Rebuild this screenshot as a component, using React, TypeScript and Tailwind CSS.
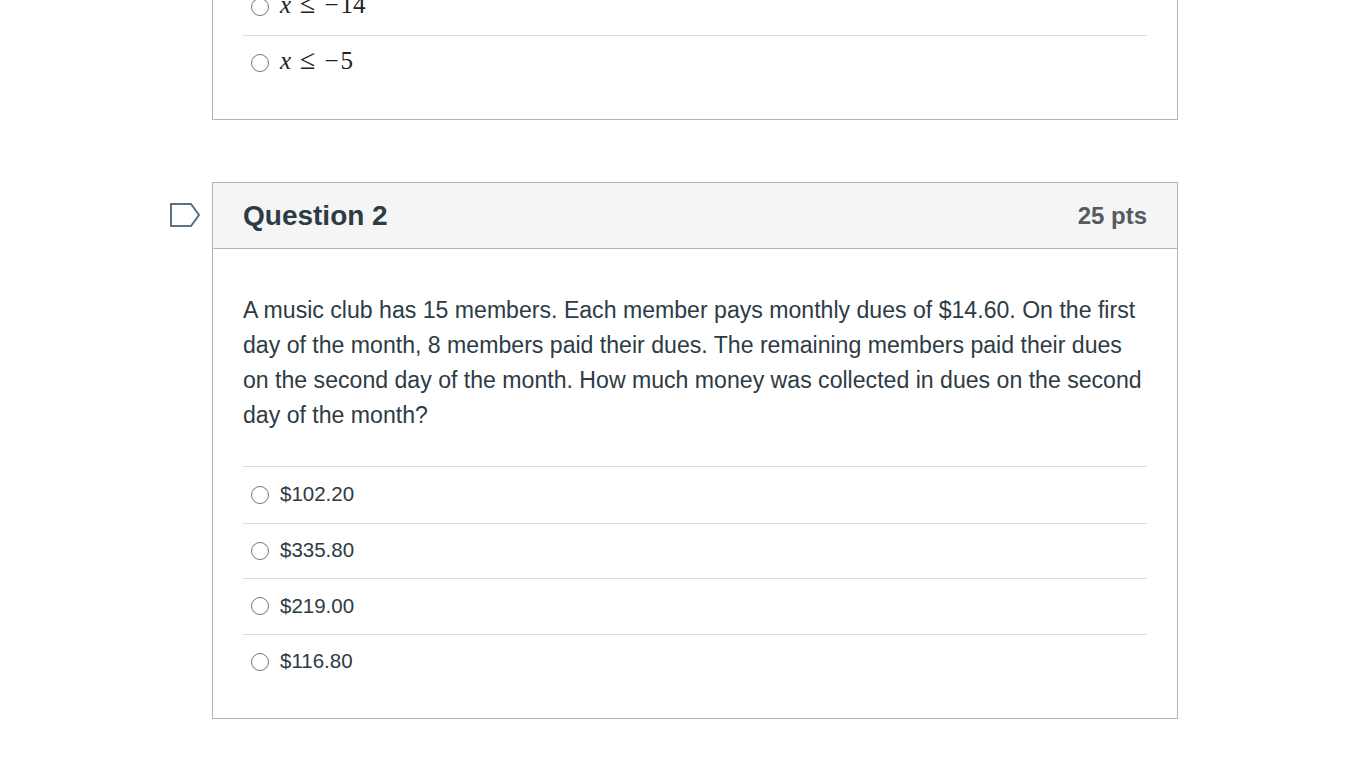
import React from 'react';

const sans = { fontFamily: '"Liberation Sans", Arial, sans-serif' };

function Radio() {
  return <span className="inline-block w-[18px] h-[18px] rounded-full border border-[#767676] bg-white shrink-0" />;
}

function MathAnswer({ value }: { value: string }) {
  return (
    <span className="text-[25px] text-[#222] leading-none -mt-[5px]" style={{ fontFamily: '"Liberation Serif", "DejaVu Serif", serif' }}>
      <span className="italic">x</span>
      <span className="mx-[9px] text-[28px]">≤</span>
      <span>−</span>
      <span className="ml-[2px]">{value}</span>
    </span>
  );
}

function OptionRow({ children, first }: { children: React.ReactNode; first?: boolean }) {
  return (
    <div className={`h-[55.5px] flex items-center gap-[11px] pl-[8px] ${first ? '' : 'border-t border-[#d9dcde]'}`}>
      <Radio />
      {children}
    </div>
  );
}

function FlagIcon() {
  return (
    <svg width="32" height="26" viewBox="0 0 32 26" className="shrink-0">
      <path d="M2 2 H22 L30 13 L22 24 H2 Z" fill="none" stroke="#5c7183" strokeWidth="2" strokeLinejoin="miter" />
    </svg>
  );
}

export default function App() {
  const answers = ['$102.20', '$335.80', '$219.00', '$116.80'];
  return (
    <div className="min-h-screen bg-white overflow-hidden" style={sans}>
      <div className="flex flex-col pl-[169px] w-[1178px]">
        {/* previous question tail */}
        <div className="ml-[43px] -mt-[22px] border border-[#b4b4b4] bg-white px-[30px] pb-[29px]">
          <OptionRow first>
            <MathAnswer value="14" />
          </OptionRow>
          <OptionRow>
            <MathAnswer value="5" />
          </OptionRow>
        </div>

        <div className="flex items-start mt-[62px]">
          <div className="w-[43px] pt-[20px]">
            <FlagIcon />
          </div>
          <div className="flex-1 border border-[#b4b4b4] bg-white">
            <div className="h-[66px] bg-[#f5f5f5] border-b border-[#b4b4b4] px-[30px] flex items-center justify-between">
              <h2 className="text-[28px] font-bold text-[#2d3b45]">Question 2</h2>
              <span className="text-[24px] font-bold text-[#555b5f]">25 pts</span>
            </div>
            <div className="px-[30px] pt-[44px] pb-[29px]">
              <p className="text-[23.1px] leading-[35px] text-[#2d3b45] mb-[33px]">
                A music club has 15 members. Each member pays monthly dues of $14.60. On the first day of the month, 8 members paid their dues. The remaining members paid their dues on the second day of the month. How much money was collected in dues on the second day of the month?
              </p>
              <div className="border-t border-[#d9dcde]">
                {answers.map((a, i) => (
                  <OptionRow key={a} first={i === 0}>
                    <span className="text-[20.5px] text-[#2d3b45]">{a}</span>
                  </OptionRow>
                ))}
              </div>
            </div>
          </div>
        </div>
      </div>
    </div>
  );
}
